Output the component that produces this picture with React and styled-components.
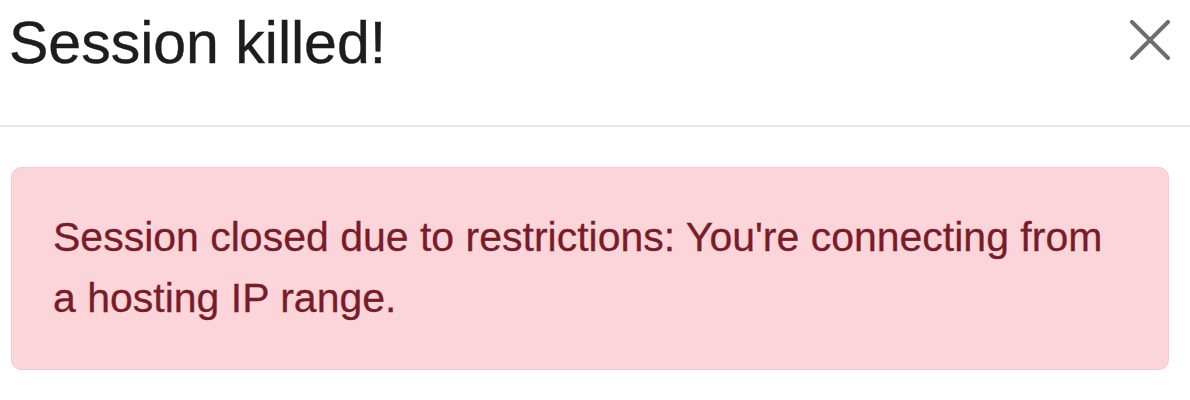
import * as React from "react"
import styled, { createGlobalStyle } from "styled-components";

const GlobalStyle = createGlobalStyle`
body {
    margin: 0;
    background: #ffffff;
    font-family: "Liberation Sans", Arial, sans-serif;
}
`

const Modal = () => {
    return (
        <StyledModal>
            <GlobalStyle />
            <Header>
                <Title>Session killed!</Title>
                <CloseButton aria-label="Close">
                    <svg width="40" height="40" viewBox="0 0 40 40">
                        <path d="M2 2 L38 38 M38 2 L2 38" stroke="#6e6e6e" strokeWidth="4" strokeLinecap="round" />
                    </svg>
                </CloseButton>
            </Header>
            <Body>
                <Alert>
                    Session closed due to restrictions: You're connecting from a hosting IP range.
                </Alert>
            </Body>
        </StyledModal>
    )
}

const StyledModal = styled.div`
width: 1190px;
background: #ffffff;
`

const Header = styled.div`
display: flex;
justify-content: space-between;
align-items: flex-start;
padding: 8px 20px 47px 9px;
border-bottom: 2px solid #e6e6e6;
`

const Title = styled.h5`
margin: 0;
font-size: 59px;
font-weight: 400;
line-height: 70px;
color: #1d1d1d;
-webkit-text-stroke: 0.4px #1d1d1d;
`

const CloseButton = styled.button`
display: flex;
padding: 0;
margin-top: 12px;
border: none;
background: transparent;
cursor: pointer;
`

const Body = styled.div`
padding: 40px 21px 30px 11px;
`

const Alert = styled.div`
padding: 39px 60px 40px 41px;
background: #fcd5da;
border: 1px solid #f7c9cf;
border-radius: 10px;
color: #7a1c27;
font-size: 41px;
line-height: 61px;
-webkit-text-stroke: 0.3px #7a1c27;
`

export default Modal
